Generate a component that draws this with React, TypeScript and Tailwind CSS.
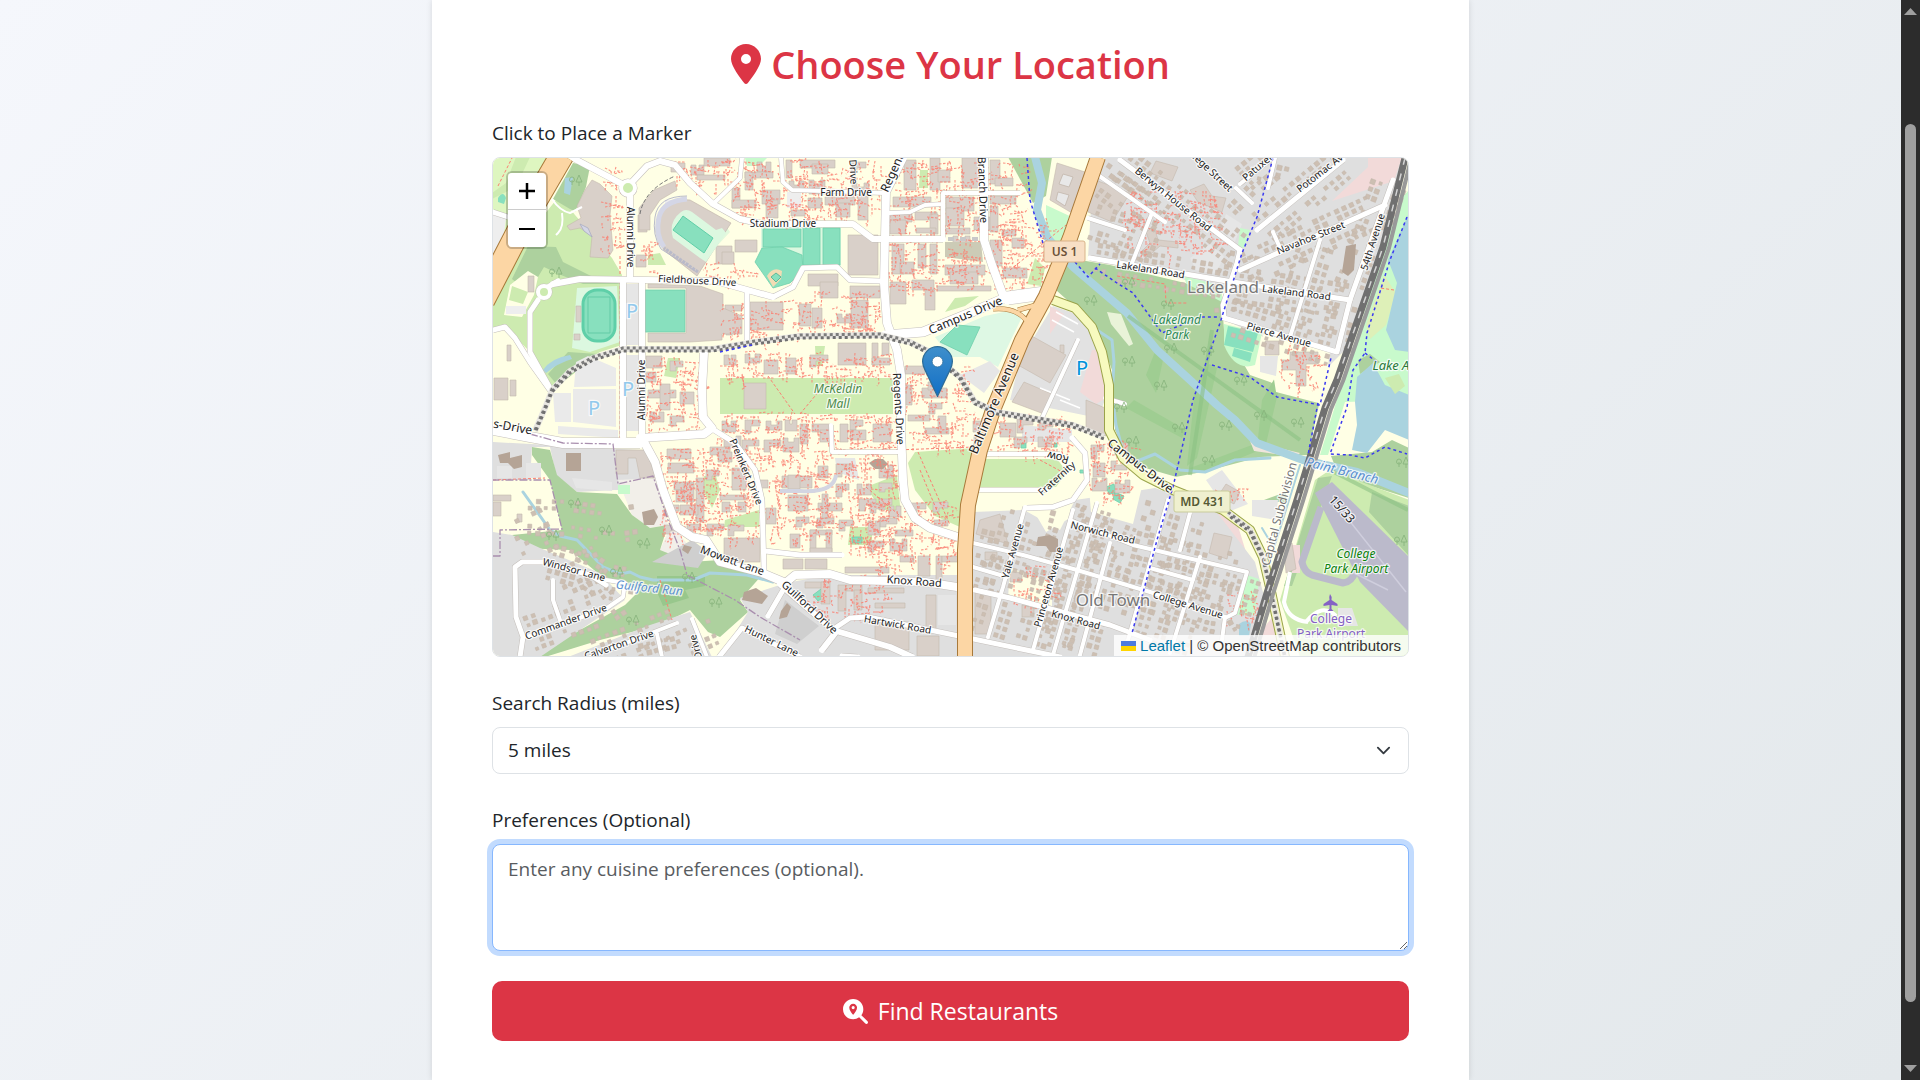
import { useState } from 'react';
import { FaLocationDot, FaMagnifyingGlassLocation } from 'react-icons/fa6';

/* ---------- map data (all coordinates share the MapCanvas viewBox) ---------- */

type Area = [fill: string, d: string];
type Road = [width: number, d: string];
type Box = [x: number, y: number, w: number, h: number];
type Label = { text: string; x: number; y: number; r?: number; size?: number; fill?: string; italic?: boolean };

const AREAS: Area[] = [
  // golf course and west lawn
  ['#def6c0', 'M492 157H552L520 215L492 262Z'],
  ['#cdebb0', 'M516 157h14l-14 30l-24 12v-6l14-10Z'],
  ['#eeeeee', 'M492 214l14 4l-4 32l-10 16Z'],
  ['#cdebb0', 'M560 195L575 215L590 232L612 258L622 275V345L600 352L570 370L548 392L533 370L528 350L505 326L493 332V300L540 220Z'],
  ['#add19e', 'M573 163L590 166L586 187L575 212L553 199Z'],
  ['#add19e', 'M528 246l28 1l7 15l28 14l30 8h-38l-22-9l-17-8l-12 20h-10l-10-8Z'],
  ['#add19e', 'M568 352l30 2l-40 32l-10-12Z'],
  ['#aad3df', 'M565 178l8-1l-3 18l-6-2Z'],
  ['#aad3df', 'M543 370q8-12 27-15l2 4q-14 4-26 14Z'],
  ['#88e0be', 'M498 198q5-8 8 0l-2 6l-6-2Z'],
  ['#ffffe5', 'M510 285l18-14l10 6l-4 18l-12 22l-18-2Z'],
  ['#cdebb0', 'M512 286l16 6l-5 12l-14-4Z'],
  ['#eeeeee', 'M506 306h20v8h-20Z'],
  // stadium precinct
  ['#e3f9dd', 'M676 214L686 211L716 236L726 226L730 232L704 260L672 234Z'],
  ['#cdebb0', 'M648 255l12-2l6 12h-18Z'],
  ['#c8facc', 'M745 158h22l-8 8h-12Z'],
  ['#dcf8e0', 'M577 288l40-2l3 56l-30 10l-18-4Z'],
  // parking lots
  ['#e6e6e6', 'M626 284h13v61h-13ZM626 355h13v76h-13Z'],
  ['#eaeaea', 'M576 362l12-6l28 12v18l-42 1ZM573 389h43v38l-43-5ZM553 393h18v29h-16ZM558 426l60 4v8l-60-4Z'],
  ['#eeeeee', 'M787 192h14v16h-14ZM665 200h8v12h-8Z'],
  ['#e6e6e6', 'M835 458h20l4 22l-22-8Z'],
  // fields
  ['#dcf8e0', 'M761 226h80v42h-35l-18-16h-27Z'],
  ['#cdebb0', 'M720 378h173v36H720ZM668 358h12l-4 20l-12-2ZM815 346h10l-3 20h-6Z'],
  ['#cdebb0', 'M704 476h12l4 14l-8 18l-8-16ZM725 520l34-10v17h-35ZM850 527h22v18h-24ZM920 170h8v18h-9ZM955 298l24-2l-14 10l-20 6Z'],
  ['#cdebb0', 'M915 452L975 448L960 527L935 516L915 490L908 463Z'],
  ['#cdebb0', 'M866 487L897 475L901 515L880 508Z'],
  ['#cdebb0', 'M983 459H1057L1067 472L1056 487H978Z'],
  ['#def8e4', 'M935 337L985 316L1013 310L1022 317L998 367L980 357H950Z'],
  // north-east
  ['#add19e', 'M1008 157H1052L1046 196L1033 203Z'],
  ['#c8facc', 'M1046 205l30 14l-12 28l-18-6Z'],
  ['#cdebb0', 'M1035 258l10 10l-4 18l-14-2Z'],
  ['#dfdfdf', 'M1105 157H1404L1388 220L1350 345L1330 365L1224 320L1230 290L1088 258L1092 190Z'],
  ['#f2dad9', 'M1368 157h34l-8 24l-62 20l36-34Z'],
  ['#e6e6e6', 'M1190 258l20-14l14 12l-8 18l-20-4ZM1226 214l16 10l-8 20l-14-12Z'],
  ['#c8facc', 'M1184 276l38 10v30l-30-12ZM1240 228l10 2l-6 18l-6-2Z'],
  ['#add19e', 'M1068 258L1110 265L1185 283L1222 302L1224 330L1250 375L1320 400L1308 455L1260 457L1180 478L1135 465L1115 430L1112 370L1095 325L1056 290Z'],
  ['#9fcd92', 'M1126 408l8-8l52 30l-4 8ZM1146 375l10-26l8 6l-8 38ZM1195 390l14-26l8 4l-20 90l-10 8ZM1262 400l14-24l5 4l-16 68h-8ZM1190 468l70-26v8l-64 26Z'],
  ['#e9f3d8', 'M1107 312l14 2l12 30l-4 2l-18-22Z'],
  ['#efe5dc', 'M1250 441l50 12l-4 4l-42-6Z'],
  ['#c8facc', 'M1224 324L1262 333L1255 365Q1235 372 1224 345Z'],
  ['#ffffe5', 'M1262 334l68 18l-8 52l-46-12l-6-38Z'],
  ['#e6e6e6', 'M1260 356h18l-2 20l-16-4Z'],
  ['#88e0be', 'M1228 326l30 7l-5 19l-29-7ZM1234 348l18 5l-2 9l-18-6Z'],
  // lake side
  ['#c8facc', 'M1400 200L1409 190V400L1345 402L1328 455H1320L1346 370Z'],
  ['#def0b8', 'M1384 275l12 18l-10 32l-16 14l-4-14Z'],
  ['#add19e', 'M1358 360l12-6l10 8l-20 12ZM1372 452l20-12l17 8v50l-70-22l-8-20Z'],
  ['#aad3df', 'M1409 213L1388 260L1397 283L1386 330L1395 350L1409 352Z'],
  ['#aad3df', 'M1355 402L1357 377L1373 363L1385 385L1409 395V440L1385 430L1367 453L1352 450L1357 425Z'],
  ['#cdebb0', 'M1385 378l14-4l6 12l-10 8Z'],
  // airport
  ['#cdebb0', 'M1315 480L1330 470L1409 500V657H1300L1280 600Z'],
  ['#add19e', 'M1372 492l37 14v50l-40-44ZM1318 478l14-2l-40 110h-8Z'],
  ['#bbbacb', 'M1315 493L1332 482L1409 557V632L1360 582Z'],
  ['#ffffe5', 'M1170 478L1255 462L1310 462L1285 540L1262 560L1215 500L1160 482Z'],
  ['#f2dad9', 'M1215 510l20 6l14 46l-34-12ZM1262 630l16-20l10 47h-28ZM1290 545h10v28h-8Z'],
  ['#add19e', 'M1264 500l22-8v10h-20Z'],
  ['#e6e6e6', 'M1252 500h26l-2 20l-24-4ZM1206 480l16-10l26 34l-20 8ZM1338 608h14l6 18h-20Z'],
  // east of Baltimore Avenue
  ['#e2e2e2', 'M1053 306L1082 316L1100 345L1108 392L1098 418L1010 400L1020 360Z'],
  ['#f2dad9', 'M1092 350l8 0l10 46l-14 8l-16-12ZM973 600l22 8v24h-22ZM1050 306l14 8l-14 20Z'],
  ['#e6e6e6', 'M960 375l30-14l10 10l-16 22ZM1022 425l50 5v12h-50Z'],
  // Old Town
  ['#dfdfdf', 'M973 512L1024 510L1060 530L1075 500L1110 495L1155 488L1215 510L1255 562L1265 600L1250 657H973Z'],
  ['#ffffe5', 'M1010 568l42 14v24l-44-8ZM1032 508l38-4v14l-24 14ZM1085 440l60 34l-12 50l-42-12Z'],
  ['#c8facc', 'M1247 575l12 4l-4 36h-18Z'],
  ['#aad3df', 'M1239 624q8-6 12 0l-2 12h-10Z'],
  // south-west
  ['#dfdfdf', 'M493 442L640 450L652 490H615L577 492L556 475L550 447L532 447L530 480L493 479Z'],
  ['#ffffe5', 'M493 480H550L561 528L493 530Z'],
  ['#f2efe9', 'M618 480L655 478L668 525L650 528L632 515ZM672 524l18 24l-10 12l-22-6Z'],
  ['#add19e', 'M532 447L550 450L557 475L577 492L617 494L632 515L650 528L668 525L660 550L690 562L720 560L762 575L740 600L748 612L720 637L708 632L690 610L660 625L600 640L545 657H530L580 630L625 605L640 590L600 575L570 550L520 548L512 535L562 530L550 480L532 455Z'],
  ['#98c78c', 'M657 576h48v10l-20 4l4 8l-26 8l-6-14Z'],
  ['#dfdfdf', 'M493 532L512 535L540 548L600 573L625 600L580 630L540 657H493Z'],
  ['#dfdfdf', 'M568 657L650 625L690 612L712 657ZM720 657L748 612L740 598L786 583L830 575H957V657Z'],
  ['#cfcfcf', 'M652 562l40-22l16 12l-10 16ZM785 600l34 26l-22 18l-22-10Z'],
  ['#e6e6e6', 'M572 478l40 4v9l-36-3ZM497 466h15v12h-15ZM526 463h15v15h-15ZM938 595h18v30h-18Z'],
  ['#c8facc', 'M618 485h12v9h-12Z'],
];

const PITCHES = [
  'M645 290h40v42h-40Z',
  'M763 229h38v18h-38ZM803 228h17v37h-17ZM823 228h17v37h-17Z',
  'M762 248L782 247L802 255L803 270L790 283L773 288L755 262Z',
  'M940 342L957 325L980 327L967 355Z',
  'M852 537h10v6h-10ZM813 595l8-6l3 8l-6 4ZM1106 487l8-3l2 9l-7 1ZM1115 492l9 4l-4 7l-7-4ZM1021 443h5v5h-5ZM1040 442h4v4h-4ZM1054 443h3v4h-3ZM1080 470h4v3h-4Z',
];

const LANDMARKS = [
  'M585 190L592 180L600 184L612 196L610 215L613 250L608 258L590 257L592 236L580 228L570 230L567 226L581 218L577 206Z',
  'M654 190L675 181L677 190L660 200L650 215V230H639V208Z',
  'M648 284L700 286L723 294V308L742 316V334H722V340L690 342H648V333H686V288H648Z',
  'M1057 163L1085 172L1072 213L1050 200Z',
  'M1090 178L1130 193L1112 222L1088 212Z',
  'M1030 335L1066 355L1050 383L1018 365Z',
  'M1024 382L1052 394L1044 414L1012 402Z',
  'M1086 400l24 10l-4 26l-20-8Z',
  'M975 590l16 4v40h-16Z',
  'M1156 161l22 6l-6 14l-22-8Z',
  'M1146 232l8-6l4 14l20 2v6l-18-2l-14 12l-6-5l10-10Z',
  'M1190 190l14-6l8 12l14 2l-4 14l-24-10Z',
  'M1265 341h14v14h-14ZM1290 352h28v12h-12v22h-10v-16h-14v-10h8Z',
  'M1226 484l14 8l-6 12l-16-8ZM1214 533l18 4l-5 22l-18-6Z',
  'M1284 545l8-2l4 26l-10 4Z',
  'M616 450h30l10 28h-16l-4-20h-8v16h-12Z',
  'M980 520l20-6l8 30l-32-10Z',
];

const DARK_BUILDINGS = [
  'M498 455l12-3v6l12-3v12l-8 2l-6-6h-8Z',
  'M566 453h15v18h-15Z',
  'M642 512l12-3l4 8l-4 8h-10Z',
  'M869 463l6-4h8l5 5l-5 5h-8Z',
  'M1038 537l12-2l8 4v13h-8l-4-6h-10Z',
  'M744 592l12-4l12 8l-6 8l-20-4Z',
  'M781 611l6-8l4 4l-4 10l-8 2Z',
  'M1346 246l10-2l-2 26l-6 6l-6-4Z',
  'M684 545l8 2l-4 7l-6-4Z',
];

const BUILDINGS: Box[] = [
  [704, 158, 26, 8], [697, 175, 28, 5], [745, 172, 28, 6], [745, 172, 8, 18], [732, 188, 8, 20], [732, 200, 24, 8],
  [762, 190, 18, 14], [766, 200, 12, 18], [786, 160, 6, 18], [638, 215, 9, 17], [735, 240, 22, 12], [636, 255, 10, 12],
  [716, 246, 16, 18], [722, 252, 12, 12], [750, 302, 33, 28], [800, 160, 35, 8], [812, 164, 16, 10], [825, 197, 30, 8],
  [836, 203, 14, 14], [808, 198, 14, 10], [791, 210, 14, 6], [858, 196, 10, 24], [848, 235, 30, 40], [808, 274, 30, 12],
  [820, 282, 18, 16], [850, 286, 30, 12], [851, 300, 17, 28], [799, 304, 12, 22], [812, 308, 10, 20], [838, 343, 28, 22],
  [872, 343, 6, 22], [872, 358, 18, 7], [882, 343, 7, 12], [893, 197, 38, 10], [888, 214, 24, 8], [890, 220, 16, 14],
  [915, 212, 22, 8], [930, 214, 8, 20], [916, 228, 20, 5], [946, 197, 28, 14], [946, 208, 18, 18], [946, 228, 24, 6],
  [892, 244, 12, 30], [900, 262, 14, 12], [918, 244, 8, 24], [930, 244, 7, 30], [945, 265, 40, 10], [950, 272, 28, 12],
  [890, 282, 16, 22], [912, 280, 22, 10], [925, 290, 10, 20], [937, 286, 54, 5], [990, 196, 26, 8], [990, 206, 8, 26],
  [1002, 230, 14, 6], [990, 240, 12, 26], [1012, 238, 12, 10], [1003, 268, 24, 10], [904, 160, 12, 30], [930, 158, 10, 32],
  [938, 170, 12, 12], [962, 158, 16, 30], [990, 160, 10, 24], [995, 178, 18, 8], [905, 366, 20, 8], [906, 385, 6, 20],
  [922, 388, 25, 10], [928, 382, 12, 8], [646, 356, 16, 12], [646, 372, 10, 10], [648, 390, 28, 8], [660, 384, 10, 26],
  [680, 392, 14, 12], [744, 383, 22, 26], [764, 360, 14, 14], [786, 358, 10, 16], [800, 424, 8, 20], [812, 424, 20, 8],
  [820, 430, 10, 12], [840, 424, 8, 18], [850, 430, 16, 10], [873, 424, 18, 18], [908, 415, 22, 6], [925, 428, 24, 6],
  [938, 416, 8, 16], [1000, 423, 16, 14], [782, 476, 30, 12], [788, 495, 20, 16], [818, 503, 24, 8], [822, 494, 6, 24],
  [810, 530, 22, 5], [810, 530, 6, 22], [826, 530, 6, 22], [810, 548, 22, 5], [790, 534, 10, 14], [818, 466, 10, 12],
  [895, 530, 18, 6], [900, 556, 14, 6], [918, 556, 12, 20], [936, 556, 6, 24], [942, 556, 16, 6], [783, 559, 20, 10],
  [805, 559, 22, 10], [845, 567, 44, 6], [805, 582, 24, 6], [821, 582, 9, 22], [838, 585, 8, 26], [846, 585, 16, 6],
  [854, 590, 8, 20], [868, 588, 36, 5], [875, 603, 30, 5], [875, 622, 34, 28], [917, 636, 22, 20], [926, 595, 10, 36],
  [667, 449, 24, 10], [668, 463, 26, 10], [674, 482, 20, 8], [676, 490, 10, 12], [684, 484, 10, 18], [696, 478, 8, 44],
  [680, 505, 18, 10], [720, 495, 26, 5], [732, 468, 14, 22], [710, 447, 20, 8], [718, 452, 14, 10], [724, 538, 36, 24],
  [722, 502, 8, 10], [738, 502, 8, 10], [766, 508, 10, 16], [788, 475, 12, 14], [758, 480, 10, 8], [493, 495, 18, 6],
  [493, 502, 8, 14], [517, 514, 5, 8], [507, 345, 4, 16], [494, 378, 14, 22], [510, 380, 6, 16], [528, 276, 6, 16],
  [576, 306, 5, 16], [574, 334, 6, 6], [1060, 345, 4, 8], [1010, 572, 12, 10], [985, 552, 12, 8], [1022, 605, 12, 12],
];

const ROADS: Road[] = [
  // north campus
  [6, 'M573 158L622 184M632 182L647 166L660 161L675 165L690 183L713 204L740 219L763 224H853L873 239H943'],
  [4, 'M713 204L740 178L742 158'],
  [8, 'M903 158L886 192L884 283L887 323L897 350L901 375V430L903 480L905 500L915 518L930 528L958 537'],
  [8, 'M984 158V240L992 265L1003 295'],
  [9, 'M885 335L923 332L965 315L1005 298L1045 294'],
  [13, 'M1008 298L1045 293'],
  [4, 'M781 158L783 182L792 190L884 193'],
  [4, 'M889 213L910 212L925 205L943 204V193H1020M943 204V239'],
  [5, 'M773 297L793 287L803 268L837 267L850 280L880 281'],
  [6, 'M553 284L580 279L715 281L773 297'],
  [5, 'M538 300L530 312V352L550 388M493 330L505 327L515 338L530 362L550 390M493 212L508 217M548 287L558 281'],
  [6, 'M630 196V278M623 280V437M642 280V437'],
  [5, 'M747 293V340'],
  [8, 'M704 353L702 390L703 417L712 428L704 434L640 438'],
  // south campus
  [10, 'M493 430L530 437L563 443L640 443'],
  [8, 'M643 440L655 462L663 490L677 527L692 537L706 540L720 562L762 573L786 583'],
  [8, 'M783 585L795 575L830 574L850 580L925 582L957 587'],
  [5, 'M975 590L1010 598L1110 625L1150 640'],
  [6, 'M780 584L833 630L890 647L912 657M822 650L836 632'],
  [5, 'M714 430L735 443L755 470L762 500L764 570M765 551L800 555H842'],
  [5, 'M835 628L850 618L868 617L930 630L1060 657'],
  [4, 'M831 425L832 452H900'],
  [4, 'M983 454H1060M977 490H1046'],
  [5, 'M1072 438L1085 453L1087 480L1073 500L1053 507L1027 508'],
  [4, 'M1078 340L1042 418M1105 398L1125 404'],
  [5, 'M842 656L858 657M786 585L768 616M719 657L742 628L800 657'],
];

/* residential streets; houses are planted along these */
const STREETS: Road[] = [
  [5, 'M1120 160L1240 250'],
  [5, 'M1090 258L1233 282L1350 300'],
  [5, 'M1240 270L1385 205'],
  [5, 'M1257 230L1343 160'],
  [4, 'M1236 188L1252 203M1273 232L1280 248M1275 158L1268 188M1240 184L1270 160'],
  [5, 'M1393 180L1350 300L1337 352L1224 318L1223 305L1237 263L1240 250'],
  [4, 'M1320 240L1290 337'],
  [4, 'M1152 213L1132 263M1088 168L1165 222M1088 218L1125 230'],
  [4, 'M1070 520L1133 545L1247 572L1235 613L1225 618'],
  [4, 'M973 543L1023 555L1077 570L1150 592L1225 617L1222 640'],
  [4, 'M1025 507L1003 587L988 637M1073 510L1033 650M1097 503L1053 655M1110 543L1080 655'],
  [4, 'M1168 500L1128 640M1190 513L1180 550M1200 557L1170 653M1150 568L1193 580M973 567L1007 577'],
  [5, 'M606 585L590 575L543 562H522L515 567L516 617L523 637L520 657'],
  [4, 'M606 580L625 583L623 597L607 608L527 637M553 580V600L560 620'],
  [4, 'M590 657L677 623M657 634L662 657M692 619L707 657'],
];

const TRUNK = 'M1098 157L1070 238L1046 296L1022 340L993 410L980 450L968 505L965 550V657';
const UNIVERSITY_BLVD = 'M562 155L527 215L483 300';
const SECONDARY =
  'M1053 300L1075 308L1092 327L1102 352L1109 385L1109 430L1123 458L1143 475L1173 490L1223 510L1250 530L1263 557L1270 587L1285 657';
const LIGHT_RAIL =
  'M535 431L545 408L552 390L570 371L593 358L623 349H713L755 342L800 336L880 335L910 342L930 352L960 377L975 402L997 412L1073 425L1104 437M1228 513L1250 530L1263 557L1270 587L1285 657';
const RAILWAY = 'M1405 158L1383 247L1337 380L1325 408L1297 500L1267 593L1248 657';
const RIVERS: Road[] = [
  [8, 'M1035 157L1042 183L1037 210L1047 237L1073 267L1100 290L1127 313L1157 350L1190 380L1217 405L1235 420L1257 443L1303 460L1357 472L1409 493'],
  [3, 'M523 492L550 530L560 536L577 540L603 567L620 574L630 572L640 577L653 580L693 580L710 573L747 575L773 582'],
  [3, 'M1097 330L1112 340L1114 362L1112 395L1116 425L1122 448L1135 462L1155 454L1180 470L1205 472L1235 460L1270 458'],
  [2, 'M1300 465L1275 545M1262 528l6 10'],
];
const CYCLEWAYS =
  'M1273 158L1257 217L1242 253L1220 323L1193 400L1173 487L1157 540L1143 593L1132 633M1027 158L1030 200L1043 243L1050 260M1075 262L1088 277L1100 264M1095 268L1117 283L1133 293L1162 333L1200 317H1220M1212 365L1250 377L1277 397L1320 405L1331 358M1407 217L1390 260L1367 333L1365 353L1353 370L1347 407L1330 454L1350 455L1365 458L1385 447L1407 454M1365 353L1378 363M1318 403L1308 455M720 352L752 345';
const BOUNDARY =
  'M530 434L563 443L613 444L618 484L653 476L668 520L680 550L687 575L735 600L760 617L800 640M493 556L500 556V530L562 529L550 480H493';
const TREES = [
  [575, 180], [555, 272], [574, 503], [605, 530], [643, 543], [552, 535], [616, 572], [632, 620], [715, 602], [688, 577],
  [1090, 300], [1128, 282], [1167, 304], [1170, 348], [1128, 361], [1160, 385], [1240, 380], [1207, 350], [1120, 407],
  [1178, 427], [1225, 425], [1260, 415], [1297, 422], [1132, 441], [1208, 460], [1402, 462], [1400, 540],
];

const LABELS: Label[] = [
  { text: 'Stadium Drive', x: 783, y: 227 },
  { text: 'Farm Drive', x: 846, y: 196 },
  { text: 'Fieldhouse Drive', x: 697, y: 284, r: 3 },
  { text: 'Alumni Drive', x: 627, y: 237, r: 90 },
  { text: 'Alumni Drive', x: 645, y: 390, r: -90 },
  { text: 'Drive', x: 850, y: 172, r: 87 },
  { text: 'Regents', x: 897, y: 172, r: -66, size: 12 },
  { text: 'Branch Drive', x: 979, y: 190, r: 88, size: 11 },
  { text: 'Regents Drive', x: 895, y: 409, r: 87, size: 11 },
  { text: 'Campus Drive', x: 967, y: 319, r: -23, size: 12 },
  { text: 'Baltimore Avenue', x: 998, y: 405, r: -67, size: 13 },
  { text: 's-Drive', x: 512, y: 431, r: 10, size: 12 },
  { text: 'Preinkert Drive', x: 743, y: 473, r: 67 },
  { text: 'Windsor Lane', x: 573, y: 573, r: 15 },
  { text: 'Commander Drive', x: 567, y: 625, r: -20 },
  { text: 'Calverton Drive', x: 620, y: 648, r: -19 },
  { text: 'Drive', x: 699, y: 646, r: -105 },
  { text: 'Mowatt Lane', x: 731, y: 564, r: 20, size: 11 },
  { text: 'Guilford Drive', x: 807, y: 610, r: 43, size: 11 },
  { text: 'Hunter Lane', x: 770, y: 644, r: 26 },
  { text: 'Knox Road', x: 914, y: 585, r: 4, size: 11 },
  { text: 'Hartwick Road', x: 897, y: 628, r: 10 },
  { text: 'Yale Avenue', x: 1016, y: 552, r: -74 },
  { text: 'Princeton Avenue', x: 1052, y: 588, r: -74 },
  { text: 'Norwich Road', x: 1102, y: 536, r: 14 },
  { text: 'Knox Road', x: 1075, y: 623, r: 15 },
  { text: 'College Avenue', x: 1187, y: 608, r: 17 },
  { text: 'Row', x: 1059, y: 454, r: 195, size: 11 },
  { text: 'Fraternity', x: 1059, y: 481, r: -42 },
  { text: 'Berwyn House Road', x: 1171, y: 202, r: 39 },
  { text: 'College Street', x: 1205, y: 170, r: 43 },
  { text: 'Patuxent', x: 1262, y: 168, r: -40 },
  { text: 'Potomac Ave', x: 1324, y: 174, r: -38 },
  { text: 'Navahoe Street', x: 1312, y: 241, r: -22 },
  { text: 'Lakeland Road', x: 1150, y: 273, r: 9 },
  { text: 'Lakeland Road', x: 1296, y: 296, r: 7 },
  { text: 'Pierce Avenue', x: 1278, y: 338, r: 16 },
  { text: '54th Avenue', x: 1376, y: 243, r: -72 },
  { text: 'Capital Subdivision', x: 1283, y: 515, r: -75, size: 12, fill: '#777' },
  { text: 'Campus-Drive', x: 1138, y: 469, r: 38, size: 12 },
  { text: '15/33', x: 1339, y: 512, r: 48, size: 12 },
  { text: 'McKeldin', x: 838, y: 393, size: 12, fill: '#4c8a4c', italic: true },
  { text: 'Mall', x: 838, y: 408, size: 12, fill: '#4c8a4c', italic: true },
  { text: 'Lakeland', x: 1177, y: 324, size: 12, fill: '#2e8b57', italic: true },
  { text: 'Park', x: 1177, y: 339, size: 12, fill: '#2e8b57', italic: true },
  { text: 'Lake Artemesia', x: 1416, y: 370, size: 13, fill: '#2a7a3a', italic: true },
  { text: 'College', x: 1356, y: 558, size: 12, fill: '#0b820b', italic: true },
  { text: 'Park Airport', x: 1356, y: 573, size: 12, fill: '#0b820b', italic: true },
  { text: 'College', x: 1331, y: 623, size: 12, fill: '#8461c4' },
  { text: 'Park Airport', x: 1331, y: 638, size: 12, fill: '#8461c4' },
  { text: 'Guilford Run', x: 649, y: 592, r: 6, size: 12, fill: '#5a8fd0', italic: true },
  { text: 'Paint Branch', x: 1341, y: 475, r: 14, size: 13, fill: '#5a8fd0', italic: true },
  { text: 'Lakeland', x: 1223, y: 293, size: 17, fill: '#777' },
  { text: 'Old Town', x: 1113, y: 606, size: 17, fill: '#777' },
  { text: 'P', x: 632, y: 318, size: 20, fill: '#92c9ec' },
  { text: 'P', x: 628, y: 396, size: 20, fill: '#92c9ec' },
  { text: 'P', x: 594, y: 415, size: 20, fill: '#92c9ec' },
  { text: 'P', x: 1082, y: 375, size: 20, fill: '#0092da' },
];

const CAMPUS_ZONES: Box[] = [
  [668, 160, 110, 26], [735, 180, 50, 40], [785, 160, 98, 60], [888, 160, 135, 130], [790, 290, 90, 42], [722, 300, 60, 38],
  [645, 356, 55, 74], [720, 352, 170, 24], [718, 416, 175, 50], [770, 460, 125, 85], [660, 448, 100, 90], [905, 362, 60, 84],
  [865, 500, 90, 70], [970, 415, 100, 34], [1088, 440, 45, 58],
];

/* small LCG so the generated detail is identical on every render */
function createRandom(seed: number) {
  let state = seed;
  return () => {
    state = (state * 1664525 + 1013904223) % 4294967296;
    return state / 4294967296;
  };
}

function buildFootpaths() {
  const rand = createRandom(7);
  const zones: Box[] = [
    ...CAMPUS_ZONES,
    [640, 236, 14, 40], [700, 262, 50, 16], [600, 165, 20, 90], [1010, 565, 42, 35], [1125, 190, 90, 65], [720, 372, 175, 6],
    [720, 412, 175, 6], [1280, 340, 38, 46], [805, 575, 80, 40], [850, 520, 30, 30], [1205, 488, 40, 10], [1020, 215, 30, 70],
    [990, 295, 10, 10], [684, 470, 20, 60], [1222, 590, 34, 30], [990, 445, 90, 8],
  ];
  let d = '';
  for (const [x, y, w, h] of zones) {
    const count = Math.round((w * h) / 48);
    for (let i = 0; i < count; i++) {
      const px = Math.round(x + rand() * w);
      const py = Math.round(y + rand() * h);
      const len = Math.round(3 + rand() * 9);
      const dx = rand() > 0.5 ? len : Math.round(rand() * 4 - 2);
      const dy = Math.abs(dx) > 2 ? Math.round(rand() * 4 - 2) : len;
      d += `M${px} ${py}l${dx} ${dy}l${Math.round(rand() * 6 - 3)} ${Math.round(rand() * 6 - 3)}`;
    }
  }
  return d;
}

/* L-shaped halls that fill the space between the named ones */
function buildHalls() {
  const rand = createRandom(11);
  let d = '';
  for (const [x, y, w, h] of CAMPUS_ZONES) {
    for (let gy = y + 2; gy + 12 < y + h; gy += 18) {
      for (let gx = x + 2; gx + 16 < x + w; gx += 21) {
        const cx = Math.round(gx + rand() * 4);
        const cy = Math.round(gy + rand() * 4);
        const long = Math.round(12 + rand() * 6);
        const arm = Math.round(9 + rand() * 5);
        if (rand() > 0.9) continue;
        const taken = BUILDINGS.some(([bx, by, bw, bh]) =>
          cx < bx + bw && cx + long > bx && cy < by + bh && cy + arm > by);
        if (taken) continue;
        d += rand() > 0.5
          ? `M${cx} ${cy}h${long}v6h${6 - long}v${arm - 6}h-6Z`
          : `M${cx} ${cy}h5v4h${long - 10}v-4h5v${arm}h${-long}Z`;
      }
    }
  }
  return d;
}

function buildHouses() {
  const rand = createRandom(21);
  let d = '';
  for (const [, path] of STREETS) {
    for (const line of path.split('M').filter(Boolean)) {
      const nums = line.replace('H', 'L').replace('V', 'L').split(/[L ]/).map(Number);
      for (let i = 0; i + 3 < nums.length; i += 2) {
        const [x1, y1, x2, y2] = nums.slice(i, i + 4);
        const len = Math.hypot(x2 - x1, y2 - y1);
        if (len > 200) continue;
        const ux = (x2 - x1) / len;
        const uy = (y2 - y1) / len;
        for (let t = 6; t < len - 4; t += 8) {
          for (const side of [-16, -9, 9, 16]) {
            if (rand() > 0.7) continue;
            const s = 3 + rand() * 2;
            const cx = x1 + ux * t - uy * side;
            const cy = y1 + uy * t + ux * side;
            d += `M${cx.toFixed(1)} ${cy.toFixed(1)}l${(ux * s).toFixed(1)} ${(uy * s).toFixed(1)}l${(-uy * s).toFixed(1)} ${(ux * s).toFixed(1)}l${(-ux * s).toFixed(1)} ${(-uy * s).toFixed(1)}Z`;
          }
        }
      }
    }
  }
  return d;
}

const FOOTPATHS = buildFootpaths();
const HALLS = buildHalls();
const HOUSES = buildHouses();

function RouteShield({ text, x, y, w, h, fill, stroke, color }: {
  text: string; x: number; y: number; w: number; h: number; fill: string; stroke: string; color: string;
}) {
  return (
    <g>
      <rect x={x} y={y} width={w} height={h} rx="2" fill={fill} stroke={stroke} />
      <text x={x + w / 2} y={y + h / 2 + 4} textAnchor="middle" fontSize="12" fontWeight="600" fill={color}>{text}</text>
    </g>
  );
}

function MapCanvas() {
  return (
    <svg
      viewBox="493 158 915 498"
      preserveAspectRatio="xMidYMid slice"
      className="block h-full w-full font-['Noto_Sans',sans-serif]"
      fill="none"
      strokeLinejoin="round"
      role="img"
      aria-label="Street map of College Park"
    >
      <rect x="492" y="157" width="917" height="500" fill="#ffffe5" />
      {AREAS.map(([fill, d]) => <path key={d} d={d} fill={fill} />)}
      {PITCHES.map((d) => <path key={d} d={d} fill="#88e0be" stroke="#6fcfab" strokeWidth="0.8" />)}

      {/* running track and ball diamond */}
      <rect x="583" y="290" width="32" height="51" rx="14" fill="#88e0be" stroke="#5fcfa8" strokeWidth="3" />
      <rect x="588" y="297" width="22" height="36" stroke="#62cba6" />
      <path d="M767 276q6-10 15-5l-1 8l-8 8Z" fill="#f2dcb4" />
      <path d="M771 277l5-4l5 4l-5 5Z" fill="#88e0be" stroke="#5fb898" />

      {RIVERS.map(([w, d]) => <path key={d} d={d} stroke="#aad3df" strokeWidth={w} strokeLinecap="round" />)}
      <path d="M1128 316L1300 440M1212 330L1190 475M1330 470L1408 510" stroke="#8cc183" strokeWidth="4" opacity="0.6" />

      <g fill="#d9d0c9" stroke="#c4b8ad" strokeWidth="0.6">
        <path d={HALLS} />
        {BUILDINGS.map(([x, y, w, h]) => <rect key={`${x}-${y}-${w}`} x={x} y={y} width={w} height={h} />)}
        {LANDMARKS.map((d) => <path key={d} d={d} />)}
        <path d={HOUSES} fill="#cdbfb2" />
      </g>
      {DARK_BUILDINGS.map((d) => <path key={d} d={d} fill="#b5a496" />)}

      {/* stadium bowl, stands and pitch */}
      <path d="M690 200L731 223L697 276L664 250Q650 232 660 212Q672 197 690 200Z" fill="#d9d0c9" stroke="#c4b8ad" strokeWidth="0.7" />
      <path d="M681 212Q686 208 692 212L716 230L722 228L726 233L706 262L700 258L673 238Q668 222 681 212Z" fill="#dcf8e0" />
      <path d="M683 216L713 238L704 253L673 230Z" fill="#88e0be" stroke="#5fcfa8" />
      <path d="M687 199q-24 2-28 18q-4 18 5 30" stroke="#d4d6e6" strokeWidth="5" />
      <path d="M687 196q-29 0-32 21q-3 18 6 32l34 22" stroke="#b0b2c6" strokeWidth="0.9" />
      <path d="M698 272l-34-24" stroke="#b9bac9" strokeWidth="3" strokeDasharray="3 1" />

      <path d="M580 224l8 4l4 9l-8-6Z" fill="#d4d6e6" stroke="#a9acc0" strokeWidth="0.8" />
      <path d="M945 242h36l2 20l-38-5Z" fill="#cccbb6" />
      <path d="M1063 174l10 3l-4 10l-10-3ZM1058 192l11 3l-4 11l-9-6Z" fill="#e8e8e8" stroke="#bfb2a6" strokeWidth="0.7" />
      <path d="M1056 312l22 12M1052 320l22 12M1060 400l20 8M1040 388l30 12" stroke="#fff" strokeWidth="1.5" />

      <path d={FOOTPATHS} stroke="#fa8072" strokeOpacity="0.85" strokeWidth="1.1" strokeDasharray="2.500 1.500" />
      <path
        d="M498 186L512 158M918 452L950 525M920 470L940 518M1040 460L1066 474M866 487L905 520M896 450L975 447M1117 276L1165 284L1166 303H1188M660 580L672 620M493 480L545 478M1010 270L1066 225M1394 290L1380 288M620 256V440M768 376L795 414M800 414L830 378"
        stroke="#fa8072"
        strokeDasharray="3 2"
      />

      {/* minor roads: casing first, then the white core */}
      <g stroke="#c4bfbb">
        {ROADS.map(([w, d]) => <path key={d} d={d} strokeWidth={w + 1} />)}
        {STREETS.map(([w, d]) => <path key={d} d={d} strokeWidth={w + 1} />)}
        <circle cx="628" cy="188" r="7" strokeWidth="5" />
        <circle cx="544" cy="292" r="6" strokeWidth="5" />
      </g>
      <g stroke="#fff" strokeLinecap="round">
        {ROADS.map(([w, d]) => <path key={d} d={d} strokeWidth={w} />)}
        {STREETS.map(([w, d]) => <path key={d} d={d} strokeWidth={w} />)}
        <circle cx="628" cy="188" r="7" fill="#cdebb0" strokeWidth="4" />
        <circle cx="544" cy="292" r="6" fill="#cdebb0" strokeWidth="4" />
      </g>
      <path d="M948 239h36" stroke="#c9c9c9" strokeWidth="4" strokeDasharray="6 6" />
      <path d="M640 214q4-24 35-38" stroke="#777" strokeDasharray="4 2" />
      <path d="M552 199q8 12 18 14l12-6M562 213q2 14-4 20l-2 2" stroke="#fff" strokeWidth="2" />
      <path d="M780 491h20q34 2 36-16" stroke="#d3d5e2" strokeWidth="4" />
      <path d="M1290 572l-6 30q4 18 24 20M1306 622q16-20 30-6" stroke="#fff" strokeWidth="4" />
      <path d="M1321 507L1302 562Q1304 572 1312 575L1343 583Q1352 582 1355 572" stroke="#bbbacb" strokeWidth="7" />
      <path d="M1333 500L1406 592M1352 572L1388 590" stroke="#cfcedd" strokeWidth="1.5" />

      {/* major roads */}
      <path d="M993 309Q1015 307 1026 320M1018 310L1040 304" stroke="#a8793a" strokeWidth="5" />
      <path d={UNIVERSITY_BLVD} stroke="#a8793a" strokeWidth="25" />
      <path d={UNIVERSITY_BLVD} stroke="#fcd6a4" strokeWidth="23" />
      <path d={SECONDARY} stroke="#9aa34b" strokeWidth="10" />
      <path d={SECONDARY} stroke="#f7fabf" strokeWidth="8" />
      <path d={TRUNK} stroke="#a8793a" strokeWidth="16" />
      <path d="M993 309Q1015 307 1026 320M1018 310L1040 304" stroke="#fcd6a4" strokeWidth="4" />
      <path d={TRUNK} stroke="#fcd6a4" strokeWidth="14" />

      {/* rail */}
      <path d={LIGHT_RAIL} stroke="#e9e7e2" strokeWidth="6" />
      <path d={LIGHT_RAIL} stroke="#7c7c7c" strokeWidth="3" strokeDasharray="3 3" transform="translate(0 -1)" />
      <path d={LIGHT_RAIL} stroke="#707070" strokeWidth="3" strokeDasharray="3 3" strokeDashoffset="3" transform="translate(0 2)" />
      <path d={RAILWAY} transform="translate(6 1)" stroke="#999" strokeWidth="4" />
      <path d={RAILWAY} stroke="#707070" strokeWidth="7" />
      <path d={RAILWAY} stroke="#d4d4d4" strokeWidth="1.5" strokeDasharray="7 9" />

      <path d={CYCLEWAYS} stroke="#3a3af0" strokeWidth="1.5" strokeDasharray="3 3" />
      <path d={BOUNDARY} stroke="#a98fae" strokeWidth="1.3" strokeDasharray="8 2 2 2" />

      {/* woodland glyphs */}
      <g stroke="#86b27b" strokeWidth="0.8">
        {TREES.map(([x, y]) => (
          <path key={`${x}-${y}`} d={`M${x - 3} ${y + 5}v-5m-2.500 0a2.500 3 0 1 1 5 0a2.500 2 0 1 1-5 0M${x + 4} ${y + 6}v-4h-3l3-7l3 7h-3`} />
        ))}
      </g>

      <g textAnchor="middle" stroke="#fff" strokeOpacity="0.75" strokeWidth="2.500" paintOrder="stroke">
        {LABELS.map(({ text, x, y, r = 0, size = 10, fill = '#222', italic }) => (
          <text
            key={`${text}-${x}-${y}`}
            transform={`translate(${x} ${y}) rotate(${r})`}
            fontSize={size}
            fill={fill}
            fontStyle={italic ? 'italic' : 'normal'}
          >
            {text}
          </text>
        ))}
      </g>
      <path d="M1330 594q2 2 1.500 6l6 4v2l-6-1v4l2 2h-6l2-2v-4l-6 1v-2l6-4q-.5-4 .5-6" fill="#8461c4" />

      <RouteShield text="US 1" x={1044} y={241} w={41} h={21} fill="#f8dfc5" stroke="#d9b48b" color="#6b5138" />
      <RouteShield text="MD 431" x={1174} y={491} w={56} h={21} fill="#eff0cf" stroke="#c9cc9b" color="#555934" />
    </svg>
  );
}

function MapMarker() {
  return (
    <svg viewBox="0 0 25 41" className="h-[51px] w-[31px]" aria-hidden>
      <defs>
        <linearGradient id="pin" x1="0" y1="0" x2="0" y2="1">
          <stop offset="0" stopColor="#3f8fcb" />
          <stop offset="1" stopColor="#126fc6" />
        </linearGradient>
      </defs>
      <path
        d="M12.500.5C5.900.5.5 5.900.5 12.500c0 2.400.8 4.600 2 6.900L12.500 40.500l10-21.100c1.200-2.300 2-4.500 2-6.900C24.500 5.900 19.100.5 12.500.5Z"
        fill="url(#pin)"
        stroke="#2e6c97"
      />
      <circle cx="12.500" cy="12.500" r="4.300" fill="#fff" stroke="#2e6c97" strokeWidth="0.6" />
    </svg>
  );
}

function LocationMap() {
  return (
    <div className="relative h-[500px] overflow-hidden rounded-lg border border-[#dee2e6]">
      <MapCanvas />
      <div className="absolute top-[345px] left-1/2 -translate-x-[29px] -translate-y-[157px]">
        <MapMarker />
      </div>
      <div className="absolute top-[13px] left-[13px] flex w-[42px] flex-col overflow-hidden rounded-md border-2 border-black/20 bg-clip-padding">
        <button type="button" aria-label="Zoom in" className="flex h-[37px] items-center justify-center border-b border-[#ccc] bg-white">
          <svg viewBox="0 0 16 16" className="h-4 w-4" stroke="#000" strokeWidth="2.500" aria-hidden><path d="M8 0v16M0 8h16" /></svg>
        </button>
        <button type="button" aria-label="Zoom out" className="flex h-[37px] items-center justify-center bg-white">
          <svg viewBox="0 0 16 16" className="h-4 w-4" stroke="#000" strokeWidth="2" aria-hidden><path d="M0 8h16" /></svg>
        </button>
      </div>
      <div className="absolute right-0 bottom-0 flex items-center bg-white/80 px-[7px] font-['Liberation_Sans',sans-serif] text-[15px] leading-[21px] text-[#333]">
        <svg viewBox="0 0 15 10" className="mr-1 h-2.5 w-[15px]" aria-hidden>
          <path d="M0 0h15v5H0z" fill="#4c7be1" />
          <path d="M0 5h15v5H0z" fill="#ffd500" />
        </svg>
        <a href="https://leafletjs.com" className="text-[#0078a8]">Leaflet</a>
        <span className="whitespace-pre"> | © OpenStreetMap contributors</span>
      </div>
    </div>
  );
}

function Scrollbar() {
  return (
    <div className="flex w-[19px] shrink-0 flex-col items-center justify-between bg-[#2c2c2c] py-2" aria-hidden>
      <svg viewBox="0 0 13 7" className="h-[7px] w-[13px]"><path d="M6.500 0L13 7H0Z" fill="#9f9f9f" /></svg>
      <div className="flex w-[11px] grow flex-col pt-[109px] pb-[63px]">
        <div className="grow rounded-full bg-[#9f9f9f]" />
      </div>
      <svg viewBox="0 0 13 7" className="h-[7px] w-[13px]"><path d="M6.500 7L13 0H0Z" fill="#9f9f9f" /></svg>
    </div>
  );
}

export default function App() {
  const [radius, setRadius] = useState('5');
  const [preferences, setPreferences] = useState('');

  return (
    <div className="flex h-screen overflow-hidden bg-white font-['Open_Sans','Noto_Sans',sans-serif] text-[19px] text-[#212529]">
      <main className="flex grow justify-center bg-linear-135 from-[#f5f7fc] to-[#e3e8eb]">
        <form
          className="w-full max-w-[1037px] bg-white px-[60px] pt-9 shadow-[0_0_6px_rgba(0,0,0,0.12)]"
          onSubmit={(e) => e.preventDefault()}
        >
          <h1 className="mb-7 flex items-center justify-center gap-2.5 text-[38px] leading-[56px] font-semibold text-[#dc3545]">
            <FaLocationDot className="h-10 w-[30px]" aria-hidden />
            Choose Your Location
          </h1>

          <p className="mb-2.5 leading-[27px]">Click to Place a Marker</p>
          <LocationMap />

          <label htmlFor="radius" className="mt-8 mb-2.5 block leading-7">Search Radius (miles)</label>
          <div className="relative">
            <select
              id="radius"
              value={radius}
              onChange={(e) => setRadius(e.target.value)}
              className="block h-[47px] w-full appearance-none rounded-lg border border-[#dee2e6] bg-white px-[15px]"
            >
              <option value="1">1 mile</option>
              <option value="5">5 miles</option>
              <option value="10">10 miles</option>
              <option value="25">25 miles</option>
            </select>
            <svg viewBox="0 0 16 16" className="pointer-events-none absolute top-4 right-[18px] h-[15px] w-[15px]" fill="none" aria-hidden>
              <path d="m2 5 6 6 6-6" stroke="#343a40" strokeWidth="2" strokeLinecap="round" strokeLinejoin="round" />
            </svg>
          </div>

          <label htmlFor="preferences" className="mt-8 mb-2.5 block leading-7">Preferences (Optional)</label>
          <textarea
            id="preferences"
            autoFocus
            value={preferences}
            onChange={(e) => setPreferences(e.target.value)}
            placeholder="Enter any cuisine preferences (optional)."
            className="block h-[107px] w-full rounded-lg border border-[#dee2e6] bg-white px-[15px] py-2 leading-8 outline-none placeholder:text-[#595c5f] focus:border-[#86b7fe] focus:ring-5 focus:ring-[#c2dbfe]"
          />

          <button
            type="submit"
            className="mt-[30px] flex h-[60px] w-full items-center justify-center gap-2.5 rounded-[10px] bg-[#dc3545] text-[23px] text-white"
          >
            <FaMagnifyingGlassLocation className="h-[25px] w-[25px]" aria-hidden />
            Find Restaurants
          </button>
        </form>
      </main>
      <Scrollbar />
    </div>
  );
}
